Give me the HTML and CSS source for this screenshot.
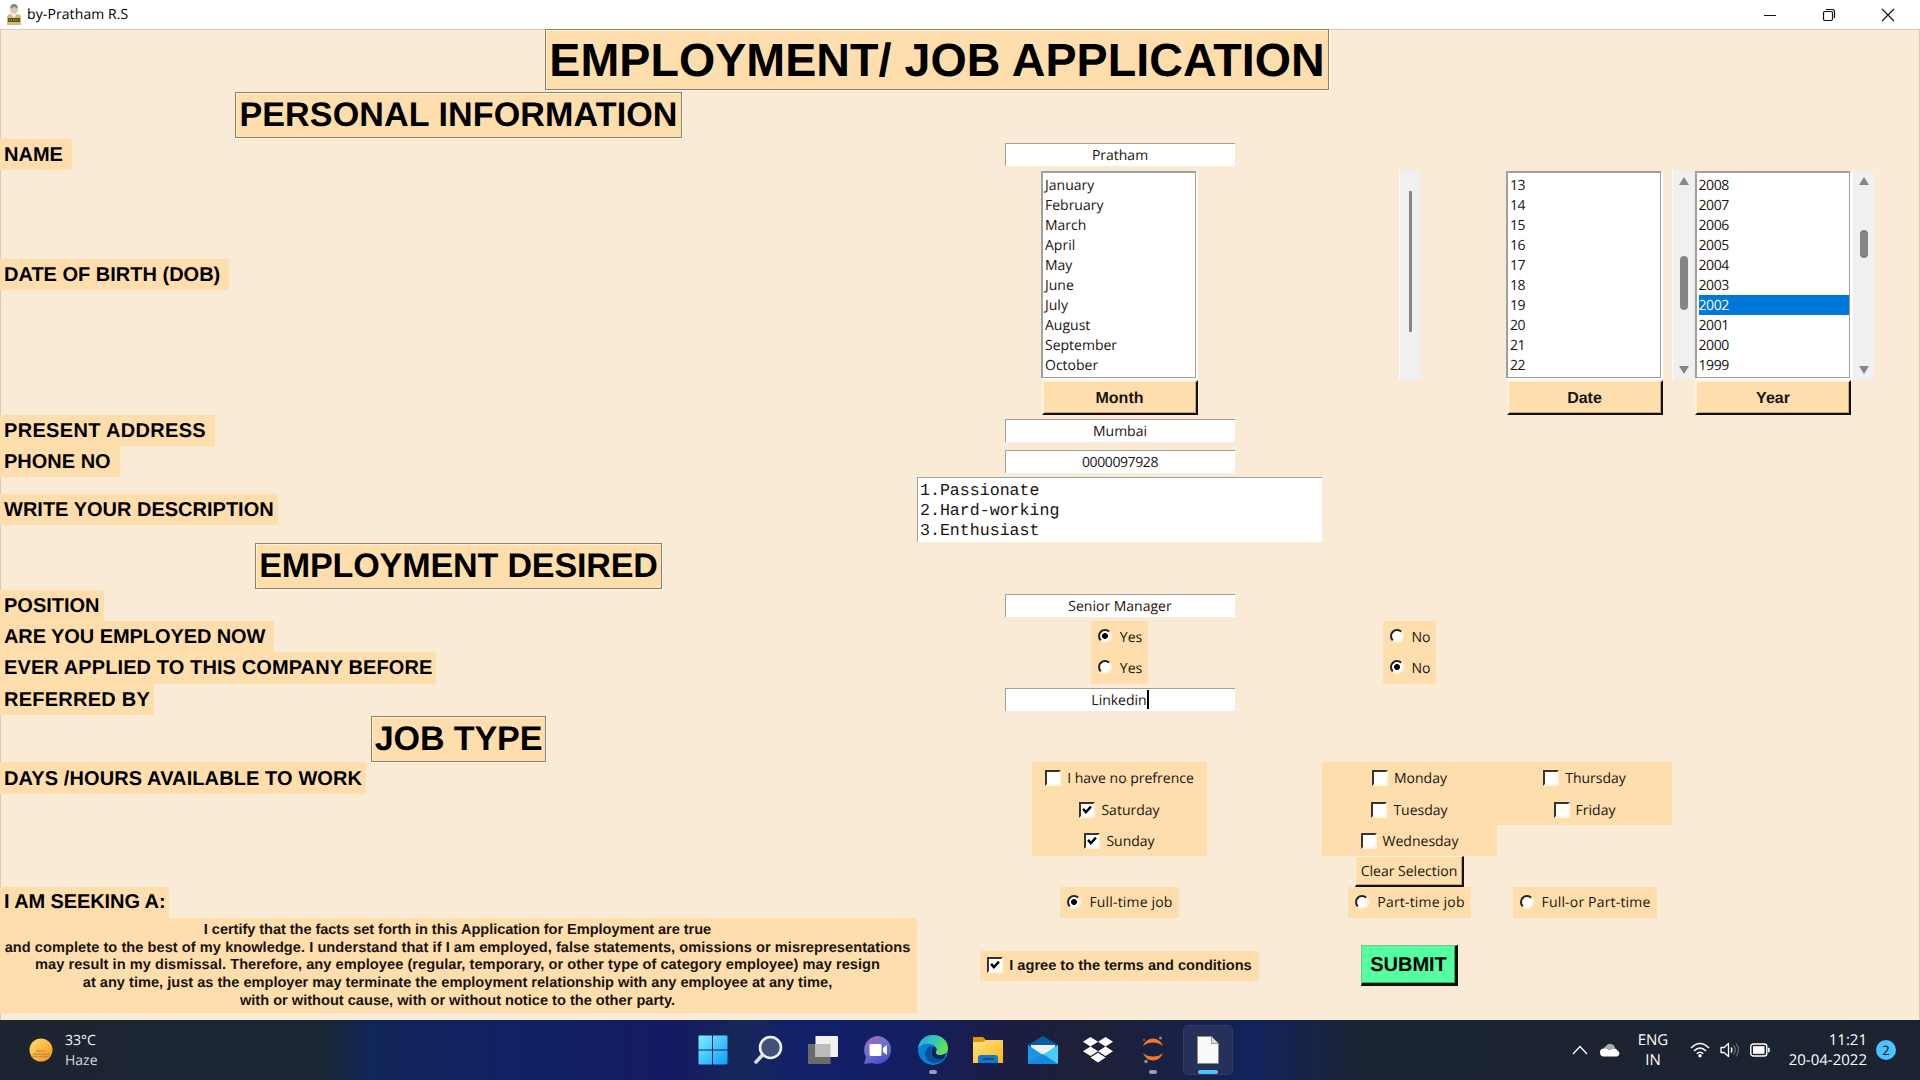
FILE: index.html
```html
<!DOCTYPE html>
<html lang="en">
<head>
<meta charset="utf-8">
<title>by-Pratham R.S</title>
<link rel="stylesheet" href="styles.css">
</head>
<body>
<header class="titlebar">
  <svg class="app-icon" width="16" height="22" viewBox="0 0 16 22"><path d="M1 21V14q0-4 4-4h6q4 0 4 4v7z" fill="#d3bc7b"/><path d="M5 10l3 4 3-4z" fill="#eee"/><circle cx="8" cy="6" r="3.8" fill="#e2c5ae"/><path d="M4 5q0-5 4-5t4 5q-2-2-4-2T4 5z" fill="#8a8580"/><path d="M2 14h12v4H2z" fill="#5f5224"/><path d="M3 16h10" stroke="#c8b05d" stroke-dasharray="1 1"/></svg>
  <span class="title-text">by-Pratham R.S</span>
  <div class="window-controls">
    <svg width="14" height="14" viewBox="0 0 14 14"><path d="M1 7.500h12" stroke="#111" fill="none"/></svg>
    <svg width="14" height="14" viewBox="0 0 14 14"><path d="M1.500 5q0-1.500 1.500-1.500h6q1.500 0 1.500 1.500v6q0 1.500-1.500 1.500H3q-1.500 0-1.500-1.500zM4 1.500h6q2.500 0 2.500 2.500v6" stroke="#111" stroke-width="1.200" fill="none"/></svg>
    <svg width="14" height="14" viewBox="0 0 14 14"><path d="M1 1l12 12M13 1L1 13" stroke="#111" stroke-width="1.200" fill="none"/></svg>
  </div>
</header>

<main class="form">
  <div class="cell title-cell"><h1 class="heading heading-main">EMPLOYMENT/ JOB APPLICATION</h1></div>

  <div class="cell r1 c0"><h2 class="heading heading-personal">PERSONAL INFORMATION</h2></div>

  <div class="cell left r2 c0"><span class="label pad">NAME</span></div>
  <div class="cell r2 c1"><div class="entry">Pratham</div></div>

  <div class="cell left dob r3 c0"><span class="label pad">DATE OF BIRTH (DOB)</span></div>
  <div class="cell r3 c1"><ul class="listbox"><li>January</li><li>February</li><li>March</li><li>April</li><li>May</li><li>June</li><li>July</li><li>August</li><li>September</li><li>October</li></ul></div>
  <div class="cell r3 c2"><div class="scroll"><i class="thumb month-thumb"></i></div></div>
  <div class="cell r3 c3"><ul class="listbox digits"><li>13</li><li>14</li><li>15</li><li>16</li><li>17</li><li>18</li><li>19</li><li>20</li><li>21</li><li>22</li></ul></div>
  <div class="scroll r3 c4"><i class="arrow up"></i><i class="thumb date-thumb"></i><i class="arrow down"></i></div>
  <div class="cell r3 c5"><ul class="listbox digits"><li>2008</li><li>2007</li><li>2006</li><li>2005</li><li>2004</li><li>2003</li><li class="selected">2002</li><li>2001</li><li>2000</li><li>1999</li></ul></div>
  <div class="scroll r3 c6"><i class="arrow up"></i><i class="thumb year-thumb"></i><i class="arrow down"></i></div>

  <div class="cell r4 c1"><div class="button column-button">Month</div></div>
  <div class="cell r4 c3"><div class="button column-button">Date</div></div>
  <div class="cell r4 c5"><div class="button column-button">Year</div></div>

  <div class="cell left r5 c0"><span class="label pad address">PRESENT ADDRESS</span></div>
  <div class="cell r5 c1"><div class="entry">Mumbai</div></div>
  <div class="cell left r6 c0"><span class="label pad">PHONE NO</span></div>
  <div class="cell r6 c1"><div class="entry digits">0000097928</div></div>
  <div class="cell left r7 c0"><span class="label">WRITE YOUR DESCRIPTION</span></div>
  <div class="textarea r7 c1">1.Passionate
2.Hard-working
3.Enthusiast</div>

  <div class="cell r8 c0"><h2 class="heading heading-desired">EMPLOYMENT DESIRED</h2></div>
  <div class="cell left r9 c0"><span class="label">POSITION</span></div>
  <div class="cell r9 c1"><div class="entry">Senior Manager</div></div>
  <div class="cell left r10 c0"><span class="label pad snug">ARE YOU EMPLOYED NOW</span></div>
  <div class="cell r10 c1"><div class="option"><i class="radio on"></i>Yes</div></div>
  <div class="cell r10 c2"><div class="option"><i class="radio"></i>No</div></div>
  <div class="cell left r11 c0"><span class="label loose">EVER APPLIED TO THIS COMPANY BEFORE</span></div>
  <div class="cell r11 c1"><div class="option"><i class="radio"></i>Yes</div></div>
  <div class="cell r11 c2"><div class="option"><i class="radio on"></i>No</div></div>
  <div class="cell left r12 c0"><span class="label referred">REFERRED BY</span></div>
  <div class="cell r12 c1"><div class="entry">Linkedin<i class="caret"></i></div></div>

  <div class="cell r13 c0"><h2 class="heading heading-job">JOB TYPE</h2></div>
  <div class="cell left r14 c0"><span class="label loose">DAYS /HOURS AVAILABLE TO WORK</span></div>
  <div class="cell r14 c1"><div class="check-row"><i class="check"></i>I have no prefrence</div></div>
  <div class="cell r14 c2"><div class="check-row"><i class="check"></i>Monday</div></div>
  <div class="cell r14 c3"><div class="check-row"><i class="check"></i>Thursday</div></div>
  <div class="cell r15 c1"><div class="check-row"><i class="check"><svg width="10" height="10" viewBox="0 0 9 9"><path d="M1 3.500L3.500 6.500L8 1.500" stroke="#000" stroke-width="2.200" fill="none"/></svg></i>Saturday</div></div>
  <div class="cell r15 c2"><div class="check-row"><i class="check"></i>Tuesday</div></div>
  <div class="cell r15 c3"><div class="check-row"><i class="check"></i>Friday</div></div>
  <div class="cell r16 c1"><div class="check-row"><i class="check"><svg width="10" height="10" viewBox="0 0 9 9"><path d="M1 3.500L3.500 6.500L8 1.500" stroke="#000" stroke-width="2.200" fill="none"/></svg></i>Sunday</div></div>
  <div class="cell r16 c2"><div class="check-row"><i class="check"></i>Wednesday</div></div>
  <div class="cell r17 c2"><div class="button clear-button">Clear Selection</div></div>

  <div class="cell left r18 c0"><span class="label seeking">I AM SEEKING A:</span></div>
  <div class="cell r18 c1"><div class="option wide"><i class="radio on"></i>Full-time job</div></div>
  <div class="cell r18 c2"><div class="option wide"><i class="radio"></i>Part-time job</div></div>
  <div class="cell r18 c3"><div class="option wide"><i class="radio"></i>Full-or Part-time</div></div>

  <p class="certify r19 c0"><span class="line-tight">I certify that the facts set forth in this Application for Employment are true</span><span class="line-wide">and complete to the best of my knowledge. I understand that if I am employed, false statements, omissions or misrepresentations</span><span class="line-wide">may result in my dismissal. Therefore, any employee (regular, temporary, or other type of category employee) may resign</span><span>at any time, just as the employer may terminate the employment relationship with any employee at any time,</span><span>with or without cause, with or without notice to the other party.</span></p>
  <div class="cell r19 c1"><div class="agree"><i class="check"><svg width="10" height="10" viewBox="0 0 9 9"><path d="M1 3.500L3.500 6.500L8 1.500" stroke="#000" stroke-width="2.200" fill="none"/></svg></i>I agree to the terms and conditions</div></div>
  <div class="cell r19 c2"><div class="button submit">SUBMIT</div></div>
</main>

<footer class="taskbar">
  <div class="weather">
    <svg width="24" height="24" viewBox="0 0 24 24"><defs><linearGradient id="sun" x1="0" y1="0" x2="1" y2="1"><stop offset="0" stop-color="#ffe066"/><stop offset="1" stop-color="#f5921e"/></linearGradient></defs><circle cx="12" cy="12" r="11.500" fill="url(#sun)"/><path d="M7 13h9M4 16h17M2 18.500h18" stroke="#b98546" stroke-width="1.500" opacity=".7"/></svg>
    <div class="weather-text"><span>33°C</span><span class="muted">Haze</span></div>
  </div>
  <nav class="apps">
    <div class="app"><svg width="30" height="30" viewBox="0 0 30 30"><defs><linearGradient id="win" x1="0" y1="0" x2="1" y2="1" gradientUnits="objectBoundingBox"><stop offset="0" stop-color="#7cf0ff"/><stop offset="1" stop-color="#0d9bff"/></linearGradient></defs><path d="M.5 1.500q0-1 1-1H14v14H.5zM15 .5h13.500q1 0 1 1v13H15zM.5 15.500H14v14H1.500q-1 0-1-1zM15 15.500h14.500v13q0 1-1 1H15z" fill="url(#win)"/></svg></div>
    <div class="app"><svg width="30" height="30" viewBox="0 0 30 30"><path d="M9.500 20L3 27" stroke="#ddd" stroke-width="3.500" stroke-linecap="round"/><circle cx="17.500" cy="12.500" r="10.500" fill="#43517a" stroke="#eee" stroke-width="2.600"/></svg></div>
    <div class="app"><svg width="30" height="30" viewBox="0 0 30 30"><path d="M0 9h22.500v20H1q-1 0-1-1z" fill="#6b6b6b"/><path d="M7.500 1h21.500q1 0 1 1v19q0 1-1 1H7.500z" fill="#f2f2f2"/><path d="M7.500 9h15v13h-15z" fill="#bcbcbc"/></svg></div>
    <div class="app"><svg width="30" height="30" viewBox="0 0 30 30"><defs><linearGradient id="chat" x1="0" y1="0" x2=".6" y2="1"><stop offset="0" stop-color="#a86fa4"/><stop offset=".55" stop-color="#6e6fd0"/><stop offset="1" stop-color="#4d4fc4"/></linearGradient></defs><path d="M15 1a14 14 0 1 1-6 27L1 29l2-7A14 14 0 0 1 15 1z" fill="url(#chat)"/><rect x="6.500" y="9" width="12" height="12" rx="1.500" fill="#fff"/><path d="M20 13l4-3v10l-4-3z" fill="#fff"/></svg></div>
    <div class="app"><svg width="30" height="30" viewBox="0 0 30 30"><defs><linearGradient id="e1" x1="0" y1="0" x2="1" y2=".4"><stop offset="0" stop-color="#1ea7e8"/><stop offset=".6" stop-color="#35c9b4"/><stop offset="1" stop-color="#67e04b"/></linearGradient></defs><circle cx="15" cy="15" r="15" fill="#0b80d8"/><path d="M0 14C1 5 7 0 15 0c9 0 15 6 15 13 0 5-4 7-8 7-4 0-6-1-4-4 1-2 0-6-5-7C7 8 2 10 0 14z" fill="url(#e1)"/><path d="M12 11c-6 3-7 12 0 16 6 3 12 0 15-4-5 3-13 1-14-5 0-3 0-4 2-6z" fill="#0c4f9c"/><path d="M15.500 11.500c3 .5 4 3 2.500 5-1 2 1 3.500 4 3.500 2 0 4-.5 6-2-.5 2-1 4-2.500 5.500-5 2-11 0-12-5.500 0-3 0-5 2-6.500z" fill="#12235f"/></svg><i class="mark"></i></div>
    <div class="app"><svg width="30" height="30" viewBox="0 0 30 30"><defs><linearGradient id="fold" x1="0" y1="0" x2="1" y2="1"><stop offset="0" stop-color="#ffe083"/><stop offset="1" stop-color="#fbb917"/></linearGradient></defs><path d="M0 2h10l3 3v6H0z" fill="#dc9a00"/><path d="M0 7h10l3-2h17v23H0z" fill="url(#fold)"/><path d="M5 28v-5q0-3 3-3h14q3 0 3 3v5z" fill="#0e78d0"/><path d="M9 24h12" stroke="#07457e" stroke-width="1.500"/></svg></div>
    <div class="app"><svg width="30" height="30" viewBox="0 0 30 30"><path d="M0 10L15 1l15 9v4H0z" fill="#0a5cab"/><path d="M3 10h24v8L15 22 3 18z" fill="#efefef"/><path d="M0 10l15 10L30 10v19H0z" fill="#1d95e3"/><path d="M30 10v19L15 20z" fill="#45d0f8"/><path d="M0 29l15-10 15 10z" fill="#168ade"/></svg></div>
    <div class="app"><svg width="30" height="30" viewBox="0 0 30 30"><path d="M7.500 2L15 6.800 7.500 11.500 0 6.800zM22.500 2L30 6.800l-7.500 4.700L15 6.800zM7.500 11.500L15 16.200 7.500 21 0 16.200zM22.500 11.500L30 16.200 22.500 21 15 16.200zM15 17.800l7.500 4.700-7.500 5-7.500-5z" fill="#fff"/></svg></div>
    <div class="app"><svg width="30" height="30" viewBox="0 0 30 30"><path d="M5 11Q8 3.500 15 3.500T25 11Q21 7.500 15 7.500T5 11zM5 18Q8 25.500 15 25.500T25 18Q21 21.500 15 21.500T5 18z" fill="#f47726"/><circle cx="22.500" cy="3" r="1.500" fill="#888"/><circle cx="8" cy="26.500" r="1.700" fill="#999"/><circle cx="6" cy="5" r="1" fill="#777"/></svg><i class="mark"></i></div>
    <div class="app active"><svg width="30" height="30" viewBox="0 0 30 30"><path d="M4.500 1.500h14l7 7v20h-21z" fill="#fafafa" stroke="#8c8c80"/><path d="M18.500 1.500v7h7z" fill="#ddd" stroke="#999"/></svg><i class="mark"></i></div>
  </nav>
  <div class="tray">
    <svg class="chevron" width="16" height="10" viewBox="0 0 16 10"><path d="M1 9l7-7.500L15 9" stroke="#fff" stroke-width="1.300" fill="none"/></svg>
    <svg class="cloud" width="20" height="14" viewBox="0 0 20 14"><path d="M4 8a4 4 0 0 1 2-5 5 5 0 0 1 9 2l2 3z" fill="#aaa"/><path d="M4 13.500a4 4 0 0 1 0-8q3-.5 5 2l4-1.500q3-1 5 2a3 3 0 0 1-1 5.500z" fill="#fff"/></svg>
    <div class="lang"><span>ENG</span><span>IN</span></div>
    <svg class="wifi" width="20" height="16" viewBox="0 0 20 16"><path d="M1 6q9-9 18 0M4 9q6-6 12 0M6.800 11.800q3.200-3 6.400 0" stroke="#fff" stroke-width="1.500" fill="none"/><circle cx="10" cy="13.700" r="1.700" fill="#fff"/></svg>
    <svg class="sound" width="20" height="16" viewBox="0 0 20 16"><path d="M1 5.500h3L8.500 1.500v13L4 10.500H1z" stroke="#fff" stroke-width="1.300" fill="none" stroke-linejoin="round"/><path d="M11 5.500q2 2.500 0 5" stroke="#fff" stroke-width="1.300" fill="none"/><path d="M13.500 3.500q4 4.500 0 9M16 1.500q5 6.500 0 13" stroke="#68707c" stroke-width="1.200" fill="none"/></svg>
    <svg class="battery" width="20" height="14" viewBox="0 0 20 14"><rect x=".8" y="1" width="16" height="12" rx="2.500" stroke="#fff" stroke-width="1.400" fill="none"/><rect x="3" y="3.200" width="11.500" height="7.600" fill="#fff"/><path d="M18 4.500q2 0 2 2.500t-2 2.500z" fill="#fff"/></svg>
    <div class="clock"><span>11:21</span><span>20-04-2022</span></div>
    <span class="badge">2</span>
  </div>
</footer>
</body>
</html>
```
FILE: styles.css
```css
* { box-sizing: border-box; }
body {
  margin: 0;
  width: 1920px;
  height: 1080px;
  overflow: hidden;
  display: flex;
  flex-direction: column;
  background: #faebd7;
  color: #1a1410;
  font: 14px/20px "Open Sans", sans-serif;
  font-kerning: none;
  text-rendering: geometricPrecision;
}
i { display: block; flex: none; }
svg { display: block; flex: none; }

.titlebar {
  flex: none;
  height: 29px;
  display: flex;
  align-items: center;
  padding: 0 25px 0 6px;
  background: #fff;
  color: #000;
}
.app-icon { margin-right: 5px; }
.title-text { padding-top: 1px; font-size: 14px; letter-spacing: 0.1px; }
.window-controls { margin-left: auto; display: flex; gap: 45px; }

.form {
  flex: 1;
  display: grid;
  grid-template-columns: 917px 405px 175px 175px 22px 158px 22px;
  grid-template-rows: 61px 49px 31px 210px 35px 31px 31px 65px 48px 31px 31px 32px 31px 47px 32px 31px 31px 31px 31px 95px;
  box-shadow: inset 1px 1px 0 #d8cdbb, inset -1px 0 0 #d8cdbb;
}
.cell { display: flex; align-items: center; justify-content: center; min-width: 0; }
.left { justify-content: flex-start; }
.c0 { grid-column: 1; } .c1 { grid-column: 2; } .c2 { grid-column: 3; } .c3 { grid-column: 4; }
.c4 { grid-column: 5; } .c5 { grid-column: 6; } .c6 { grid-column: 7; }
.r1 { grid-row: 2; } .r2 { grid-row: 3; } .r3 { grid-row: 4; } .r4 { grid-row: 5; }
.r5 { grid-row: 6; } .r6 { grid-row: 7; } .r7 { grid-row: 8; } .r8 { grid-row: 9; }
.r9 { grid-row: 10; } .r10 { grid-row: 11; } .r11 { grid-row: 12; } .r12 { grid-row: 13; }
.r13 { grid-row: 14; } .r14 { grid-row: 15; } .r15 { grid-row: 16; } .r16 { grid-row: 17; }
.r17 { grid-row: 18; } .r18 { grid-row: 19; } .r19 { grid-row: 20; }
.title-cell { grid-area: 1 / 1 / 2 / 8; }
.r3.cell:not(.left) { align-items: flex-end; }
.dob { padding-bottom: 2px; }

.heading {
  margin: 0;
  height: 46px;
  padding: 0 3px;
  border: 1px solid #8f8069;
  box-shadow: inset 1px 1px 0 #fff3dc, 1px 1px 0 #fff8ec;
  background: #ffdead;
  color: #000;
  font: bold 34.1px/44px "Liberation Sans", Arial, sans-serif;
  white-space: nowrap;
}
.heading-main { height: 61px; font-size: 46.6px; line-height: 61px; letter-spacing: 0.05px; }
.heading-personal { letter-spacing: 0.1px; }
.heading-desired { letter-spacing: -0.16px; }
.heading-job { letter-spacing: -0.1px; }
.label {
  align-self: center;
  height: 100%;
  max-height: 31px;
  padding: 0 4px 0 4px;
  background: #ffdead;
  color: #000;
  font: bold 20px/32px "Liberation Sans", Arial, sans-serif;
  white-space: nowrap;
}
.r11 .label, .r14 .label { max-height: 32px; }
.r14 .label { line-height: 34px; }
.label.pad { padding-right: 9px; }
.label.address { letter-spacing: 0.33px; }
.label.loose { letter-spacing: 0.1px; }
.label.snug { letter-spacing: -0.08px; }
.label.referred { letter-spacing: 0.25px; }
.label.seeking { letter-spacing: -0.1px; line-height: 31px; }

.entry {
  width: 230px;
  height: 23px;
  display: flex;
  justify-content: center;
  background: #fff;
  border-top: 1px solid #a0a0a0;
  border-left: 1px solid #a0a0a0;
  line-height: 23px;
}
.caret { width: 2px; height: 19px; margin: 1px 0 0 0; background: #000; }
.digits { letter-spacing: -0.4px; }

.listbox {
  list-style: none;
  margin: 0 2px 2px 0;
  width: 155px;
  height: 207px;
  padding: 2px 0 2px 2px;
  background: #fff;
  border: 2px solid #a0a0a0;
  border-right-width: 1px;
  border-bottom-width: 1px;
  box-shadow: 2px 2px 0 #fff;
}
.listbox li { height: 20px; line-height: 21px; }
.listbox .selected { background: #0078d7; color: #fff; }

.scroll {
  width: 22px;
  height: 210px;
  align-self: end;
  display: flex;
  flex-direction: column;
  align-items: center;
  padding: 7px 0 6px 1px;
  background: #f0f0f0;
  border-left: 1px solid #fbfbfb;
}
.thumb { width: 8px; border-radius: 4px; background: #858585; }
.arrow { border: 5px solid transparent; border-top: 0; border-bottom: 8px solid #858585; }
.arrow.down { border-bottom: 0; border-top: 8px solid #858585; margin-top: auto; }
.month-thumb { width: 3px; height: 141px; margin-top: 14px; border-radius: 1px; }
.date-thumb { height: 54px; margin-top: 71px; }
.year-thumb { height: 28px; margin-top: 45px; }

.button {
  display: flex;
  align-items: center;
  justify-content: center;
  background: #ffdead;
  border: 2px solid #fff3dc;
  border-right-color: #111;
  border-bottom-color: #111;
  box-shadow: inset -1px -1px 0 #c4a97f;
}
.column-button { width: 156px; height: 35px; padding-top: 2px; font: bold 16px/20px "Liberation Sans", Arial, sans-serif; }
.clear-button { width: 109px; height: 31px; padding-top: 2px; border-width: 1px 2px 2px 1px; white-space: nowrap; }
.submit {
  width: 97px;
  height: 41px;
  padding-top: 1px;
  background: #54ff9f;
  border-color: #7dbd8f #111 #111 #7dbd8f;
  border-width: 1px 3px 3px 1px;
  box-shadow: inset -1px -1px 0 #2fae68;
  color: #000;
  font: bold 20px/24px "Liberation Sans", Arial, sans-serif;
}

.textarea {
  margin: 0;
  background: #fff;
  border-top: 1px solid #a0a0a0;
  border-left: 1px solid #a0a0a0;
  padding: 3px 2px;
  font: 16.6px/20px "Liberation Mono", "Courier New", monospace;
  white-space: pre;
}

.option {
  height: 100%;
  display: flex;
  align-items: center;
  padding: 1px 6px 0 7px;
  background: #ffdead;
  white-space: nowrap;
}
.r10 .option { padding-top: 2px; }
.option.wide { letter-spacing: 0.18px; }
.radio {
  width: 14px;
  height: 14px;
  margin: 0 8px 3px 0;
  border-radius: 50%;
  border: 2px solid;
  border-color: #222 #fff3dc #fff3dc #222;
  background: #fff;
}
.radio.on { background: radial-gradient(circle, #000 2.6px, #fff 3.2px); }
.check {
  width: 16px;
  height: 16px;
  margin: 0 6px 2px 0;
  padding: 1px;
  border: 2px solid;
  border-color: #3a332a #fff6e6 #fff6e6 #3a332a;
  background: #fff;
}
.check-row {
  width: 175px;
  height: 100%;
  display: flex;
  align-items: center;
  justify-content: center;
  padding-top: 2px;
  background: #ffdead;
  white-space: nowrap;
}
.agree {
  height: 30px;
  display: flex;
  align-items: center;
  padding: 1px 7px 0;
  background: #ffdead;
  font: bold 14.6px/20px "Liberation Sans", Arial, sans-serif;
  white-space: nowrap;
}
.certify {
  margin: 0;
  padding: 4px 2px 0 0;
  display: flex;
  flex-direction: column;
  align-items: center;
  background: #ffdead;
  font: bold 14.6px/17.7px "Liberation Sans", Arial, sans-serif;
  white-space: nowrap;
}
.line-tight { letter-spacing: -0.06px; }
.line-wide { letter-spacing: 0.05px; }

.taskbar {
  flex: none;
  height: 60px;
  display: grid;
  grid-template-columns: 688px 550px 1fr;
  background: linear-gradient(90deg, #1d2431 0, #1b2634 320px, #11265a 370px, #111f64 560px, #151a63 680px, #152858 740px, #12206a 800px, #121f63 900px, #1b1d45 1000px, #1c2136 1090px, #1a2142 1160px, #11235c 1250px, #1b2433 1360px, #1c2330 100%);
  color: #fff;
  font-size: 15px;
}
.weather { display: flex; align-items: center; padding-left: 29px; gap: 12px; }
.weather-text { display: flex; flex-direction: column; padding-top: 2px; font-size: 14px; line-height: 20.5px; }
.muted { color: #d6dadf; }
.apps { display: flex; gap: 5px; align-items: center; }
.app {
  position: relative;
  width: 50px;
  height: 50px;
  display: flex;
  flex: none;
  align-items: center;
  justify-content: center;
  border-radius: 5px;
}
.active { background: #27305a; border: 1px solid #333b62; }
.mark { position: absolute; bottom: 1px; width: 8px; height: 4px; border-radius: 2px; background: #9a9cb5; }
.active .mark { width: 20px; bottom: 0; background: #4cc2ff; }
.tray { display: flex; align-items: center; justify-content: flex-end; padding-right: 24px; }
.chevron { margin-right: 12px; }
.cloud { margin-right: 17px; }
.lang { display: flex; flex-direction: column; align-items: center; width: 32px; margin-right: 21px; }
.wifi { margin-right: 10px; }
.sound { margin-right: 10px; }
.clock { display: flex; flex-direction: column; align-items: flex-end; width: 86px; margin: 0 9px 0 11px; white-space: nowrap; }
.badge {
  width: 20px;
  height: 20px;
  border-radius: 50%;
  background: #4cc2ff;
  color: #10202c;
  font-size: 13px;
  text-align: center;
}
```
